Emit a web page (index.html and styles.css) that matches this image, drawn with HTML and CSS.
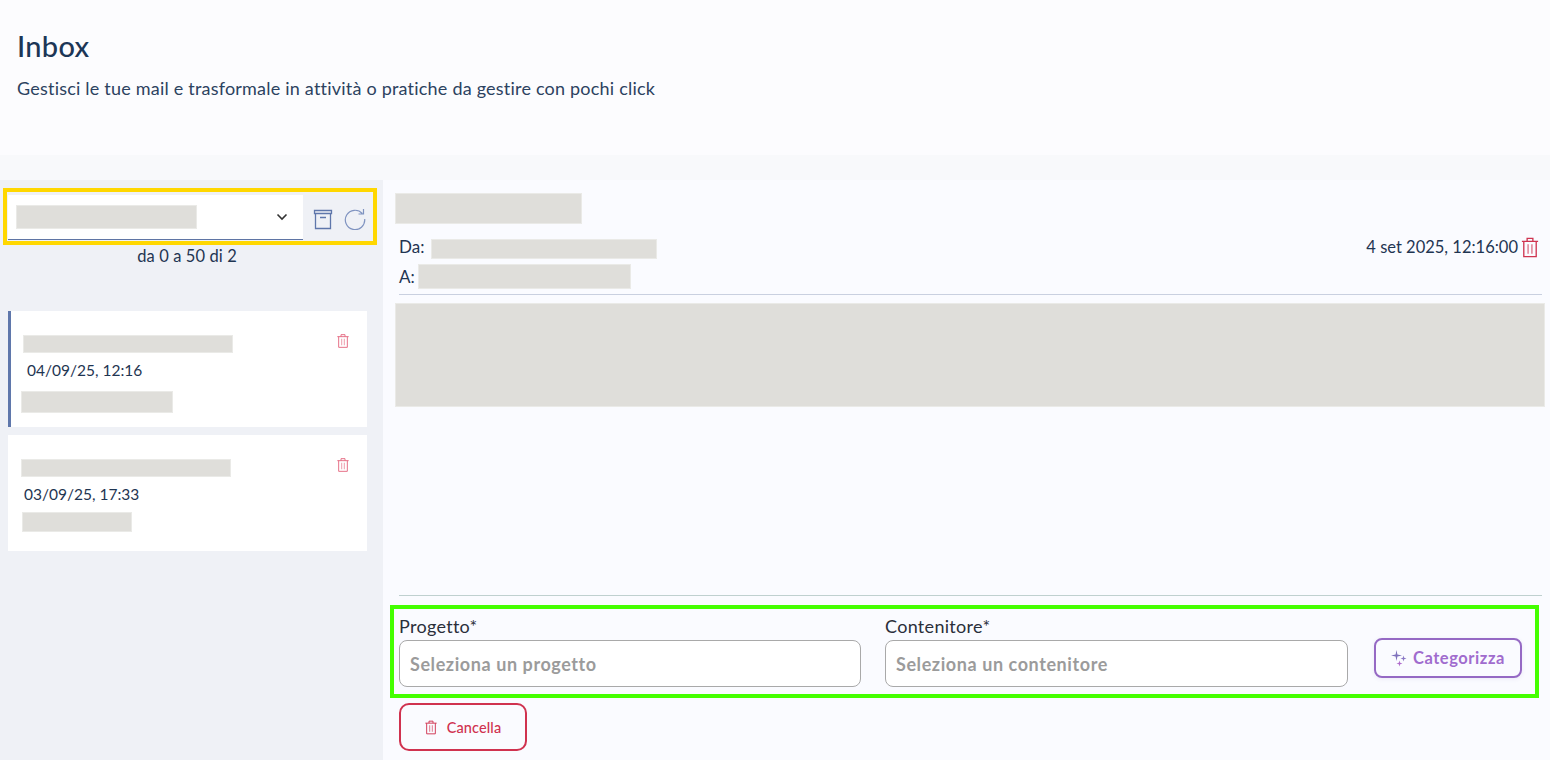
FILE: index.html
```html
<!DOCTYPE html>
<html lang="it">

<head>
  <meta charset="utf-8">
  <meta name="viewport" content="width=device-width, initial-scale=1.0">
  <title>Inbox</title>
  <link rel="stylesheet" href="styles.css">
</head>

<body>
  <svg class="sprite" width="0" height="0">
    <symbol id="trash" viewBox="0 0 18 22">
      <path d="M0.500 4.500h17M6 4.500V1.500h6v3M2.500 4.500V20.500h13V4.500" fill="none" stroke="currentColor" stroke-width="1.400" />
      <path d="M7 7.500v10M11 7.500v10" fill="none" stroke="currentColor" stroke-width="1.600" opacity=".6" />
    </symbol>
  </svg>

  <header class="page-head">
    <h1>Inbox</h1>
    <p>Gestisci le tue mail e trasformale in attività o pratiche da gestire con pochi click</p>
  </header>
  <div class="strip"></div>

  <div class="layout">
    <aside class="sidebar">
      <div class="toolbar">
        <div class="mailbox">
          <span class="redact mailbox-name"></span>
          <svg class="chevron" width="12" height="8" viewBox="0 0 12 8">
            <path d="M1.500 1.500L6 6l4.500-4.500" fill="none" stroke="#333" stroke-width="1.600" />
          </svg>
        </div>
        <button class="tool" aria-label="Archivio">
          <svg width="20" height="22" viewBox="0 0 20 22">
            <path d="M1.500 1.500h17v3h-17zM2.500 4.500v15h15v-15M7 8.500h6" fill="none" stroke="#5f77ab" stroke-width="1.300" />
          </svg>
        </button>
        <button class="tool" aria-label="Aggiorna">
          <svg width="22" height="22" viewBox="0 0 22 22">
            <path d="M18.300 5.500A9.700 9.700 0 1 0 20.700 11M19.500 1v5h-5" fill="none" stroke="#7f93c0" stroke-width="1.200" />
          </svg>
        </button>
      </div>
      <div class="pager">da 0 a 50 di 2</div>

      <div class="mail-card active">
        <div class="card-top">
          <span class="redact card-subject"></span>
          <svg class="card-trash"><use href="#trash" /></svg>
        </div>
        <div class="card-date">04/09/25, 12:16</div>
        <span class="redact card-from"></span>
      </div>
      <div class="mail-card second">
        <div class="card-top">
          <span class="redact card-subject"></span>
          <svg class="card-trash"><use href="#trash" /></svg>
        </div>
        <div class="card-date">03/09/25, 17:33</div>
        <span class="redact card-from"></span>
      </div>
    </aside>

    <main class="detail">
      <span class="redact subject"></span>
      <div class="meta">
        <div class="meta-row from-row">
          <span>Da:</span>
          <span class="redact meta-from"></span>
          <span class="sent-at">4 set 2025, 12:16:00</span>
          <svg class="head-trash"><use href="#trash" /></svg>
        </div>
        <div class="meta-row to-row">
          <span>A:</span>
          <span class="redact meta-to"></span>
        </div>
      </div>
      <hr class="rule">
      <div class="redact body-text"></div>
      <hr class="rule rule-low">

      <div class="assign">
        <div class="field">
          <label>Progetto*</label>
          <div class="select">Seleziona un progetto</div>
        </div>
        <div class="field">
          <label>Contenitore*</label>
          <div class="select">Seleziona un contenitore</div>
        </div>
        <button class="categorize">
          <svg width="17" height="18" viewBox="0 0 17 18">
            <path d="M5.500 1l.9 4.600 4.600.9-4.600.9-.9 4.600-.9-4.600L0 6.500l4.600-.9z" fill="#7f72bd" />
            <path d="M12.500 6.500l.7 2.300 2.300.7-2.300.7-.7 2.300-.7-2.300-2.300-.7 2.300-.7z" fill="#8b79c6" />
            <path d="M8.500 11.500l.7 2.300 2.300.7-2.300.7-.7 2.300-.7-2.300-2.300-.7 2.300-.7z" fill="#b06ccc" />
          </svg>
          Categorizza
        </button>
      </div>

      <button class="cancel">
        <svg class="cancel-trash"><use href="#trash" /></svg>
        Cancella
      </button>
    </main>
  </div>
</body>

</html>
```

FILE: styles.css
```css
html,
body {
  margin: 0;
  padding: 0;
  height: 100%;
  overflow: hidden;
  font-family: "Lato", "Noto Sans", sans-serif;
  color: #1f3552;
  background: #f8f9fb;
}

.sprite {
  display: block;
  position: absolute;
}

.page-head {
  height: 155px;
  box-sizing: border-box;
  padding: 28px 17px 0;
  background: #fcfcfe;
}

.page-head h1 {
  margin: 0;
  font-size: 29px;
  line-height: 36px;
  font-weight: 500;
  letter-spacing: .3px;
  color: #1c3656;
}

.page-head p {
  margin: 13px 0 0;
  font-size: 18px;
  line-height: 22px;
  letter-spacing: .21px;
  color: #2c4260;
}

.strip {
  height: 25px;
}

.layout {
  display: flex;
  height: 580px;
}

.redact {
  display: block;
  box-sizing: border-box;
  background: #dfdeda;
  border: 1px solid #eaeae7;
}

/* sidebar */
.sidebar {
  width: 383px;
  flex: none;
  background: #eff1f6;
  padding: 8px 0 0 3px;
  box-sizing: border-box;
}

.toolbar {
  width: 374px;
  height: 57px;
  box-sizing: border-box;
  border: 4px solid #ffd700;
  padding: 3px 0 0 1px;
  display: flex;
  align-items: flex-start;
}

.mailbox {
  width: 295px;
  height: 45px;
  box-sizing: border-box;
  flex: none;
  background: #fff;
  border-bottom: 1px solid #5f75a5;
  padding: 10px 15px 0 8px;
  display: flex;
  justify-content: space-between;
}

.mailbox-name {
  width: 181px;
  height: 24px;
}

.chevron {
  margin-top: 8px;
}

.tool {
  border: 0;
  background: none;
  padding: 0;
  margin: 14px 0 0 10px;
  height: 22px;
  display: block;
}

.tool + .tool {
  margin: 13px 0 0 11px;
}

.pager {
  width: 368px;
  text-align: center;
  font-size: 16.500px;
  letter-spacing: .1px;
  line-height: 20px;
  margin-top: 1px;
  margin-bottom: 45px;
}

.mail-card {
  width: 359px;
  height: 116px;
  margin-left: 5px;
  box-sizing: border-box;
  background: #fff;
  padding: 24px 0 0 13px;
}

.mail-card.active {
  border-left: 3px solid #5f77ab;
  padding-left: 12px;
  margin-bottom: 8px;
}

.card-top {
  display: flex;
  justify-content: space-between;
  padding-right: 18px;
  height: 18px;
}

.card-subject {
  width: 210px;
  height: 18px;
}

.card-trash {
  width: 12px;
  height: 16px;
  margin-top: -2px;
  color: #e4667f;
}

.card-date {
  font-size: 15.500px;
  line-height: 20px;
  margin: 7px 0 0 4px;
}

.card-from {
  width: 152px;
  height: 22px;
  margin: 11px 0 0 -2px;
}

.second .card-date {
  margin-left: 3px;
}

.second .card-from {
  width: 110px;
  height: 20px;
  margin: 8px 0 0 1px;
}

/* mail detail */
.detail {
  flex: 1;
  min-width: 0;
  background: #fafbff;
  padding: 13px 5px 0 12px;
  box-sizing: border-box;
}

.subject {
  width: 187px;
  height: 31px;
}

.meta {
  margin: 15px 0 0 4px;
  font-size: 17px;
  line-height: 16px;
}

.meta-row {
  display: flex;
  gap: 4px;
}

.from-row {
  height: 25px;
  align-items: flex-start;
}

.to-row {
  height: 25px;
  align-items: center;
  gap: 3px;
}

.meta-from {
  width: 226px;
  height: 20px;
  margin-left: 3px;
}

.meta-to {
  width: 213px;
  height: 25px;
}

.sent-at {
  margin-left: auto;
  font-size: 16.500px;
}

.head-trash {
  width: 18px;
  height: 21px;
  margin: -2px 6px 0 -1px;
  color: #cf3450;
}

.rule {
  border: 0;
  border-top: 1px solid #c9d0e0;
  margin: 5px 3px 0 4px;
}

.rule-low {
  margin-top: 188px;
  border-top-color: #bfd0cf;
}

.body-text {
  height: 104px;
  margin-top: 8px;
}

.assign {
  display: flex;
  align-items: flex-start;
  width: 1149px;
  height: 93px;
  box-sizing: border-box;
  border: 4px solid #44ff00;
  margin: 9px 0 0 -5px;
  padding: 7px 0 0 5px;
}

.field {
  width: 462px;
  margin-right: 24px;
  flex: none;
}

.field + .field {
  width: 463px;
}

.field label {
  display: block;
  font-size: 18px;
  letter-spacing: .3px;
  line-height: 21px;
  margin-bottom: 3px;
  color: #2a2f3a;
}

.select {
  height: 47px;
  box-sizing: border-box;
  border: 1px solid #a9a9a9;
  border-radius: 8px;
  background: #fff;
  padding: 0 10px;
  font-size: 18px;
  letter-spacing: .58px;
  line-height: 47px;
  font-weight: 700;
  color: #9b9b9b;
}

.categorize {
  width: 148px;
  height: 40px;
  margin: 22px 0 0 2px;
  box-sizing: border-box;
  border: 2px solid #9569c4;
  border-radius: 8px;
  background: #fafbff;
  color: #a06cce;
  font: 700 16.500px "Lato", sans-serif;
  letter-spacing: .55px;
  display: flex;
  align-items: center;
  justify-content: center;
  gap: 5px;
  padding: 0;
  box-shadow: 0 1px 4px rgba(120, 100, 180, .12);
}

.cancel {
  display: flex;
  align-items: center;
  justify-content: center;
  gap: 10px;
  width: 128px;
  height: 48px;
  box-sizing: border-box;
  margin: 5px 0 0 4px;
  border: 2px solid #d0324f;
  border-radius: 10px;
  background: #fafbff;
  color: #d0324f;
  font: 500 14.500px "Lato", sans-serif;
  letter-spacing: .1px;
  padding: 0;
}

.cancel-trash {
  width: 12px;
  height: 15px;
}
```
